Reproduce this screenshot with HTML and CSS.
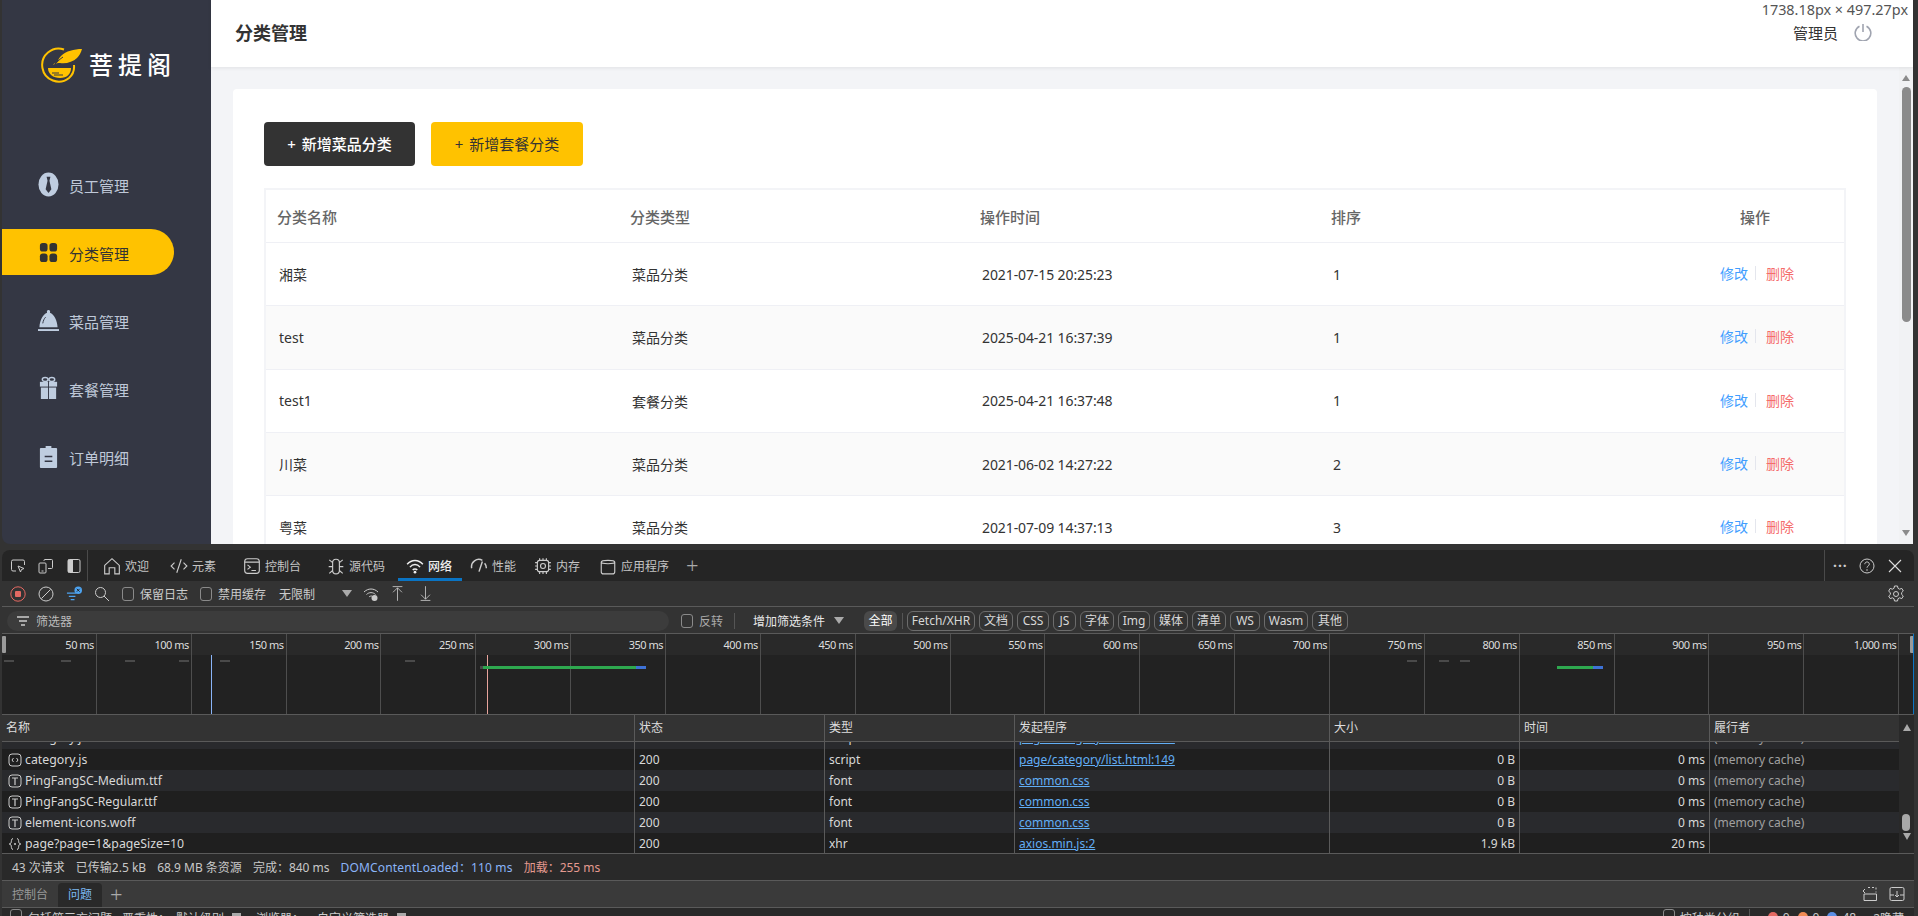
FILE: index.html
```html
<!DOCTYPE html>
<html lang="zh">
<head>
<meta charset="utf-8">
<title>分类管理</title>
<link rel="stylesheet" href="styles.css">
</head>
<body>
<div class="browser">
  <aside class="sidebar">
    <div class="logo">
      <svg class="logo-mark" viewBox="0 0 44 36" width="44" height="36">
        <path d="M24 2.500A16.500 16.500 0 1 0 29 31c4-3.500 5.500-8 5-13" fill="none" stroke="#ffc200" stroke-width="2"/>
        <path d="M42 2C34 2 26 4 21 9c-2 2-3 4-3 6-2 1-4 1-5 3 3-2 5-2 7-2 6 1 13-1 17-5 2-2 4-5 5-9z" fill="#ffc200"/>
        <path d="M15 17c3-3 5-5 8-7" fill="none" stroke="#343744" stroke-width="1"/>
        <path d="M8 21h23c0 6-4 10-11 10S8 27 8 21z" fill="#ffc200"/>
        <path d="M12 26h7M14 28h9" stroke="#343744" stroke-width="1"/>
      </svg>
      <span class="logo-text">菩提阁</span>
    </div>
    <nav class="menu">
      <a class="menu-item">
        <svg class="menu-icon" viewBox="0 0 22 26"><ellipse cx="11" cy="13" rx="10.500" ry="12.500" fill="#bfcde0"/><path d="M9 5h4l-1 4 2 9-3 4-3-4 2-9z" fill="#343744"/></svg>
        <span>员工管理</span>
      </a>
      <a class="menu-item active">
        <svg class="menu-icon" viewBox="0 0 22 26"><g fill="#333"><rect x="2" y="3" width="8" height="9" rx="3"/><rect x="12" y="3" width="8" height="9" rx="3"/><rect x="2" y="14" width="8" height="9" rx="3"/><rect x="12" y="14" width="8" height="9" rx="3"/></g></svg>
        <span>分类管理</span>
      </a>
      <a class="menu-item">
        <svg class="menu-icon" viewBox="0 0 22 26"><path d="M11 2a1.500 2 0 0 1 1.500 3C17 6.500 20 13 20.500 20H1.500C2 13 5 6.500 9.500 5A1.500 2 0 0 1 11 2z" fill="#bfcde0"/><rect x="0" y="22" width="22" height="2" fill="#bfcde0"/><path d="M5 16c.5-3 1.500-5 3-6.500" fill="none" stroke="#343744"/></svg>
        <span>菜品管理</span>
      </a>
      <a class="menu-item">
        <svg class="menu-icon" viewBox="0 0 22 26"><g fill="#bfcde0"><rect x="2" y="6" width="8.500" height="5"/><rect x="11.500" y="6" width="8.500" height="5"/><rect x="3" y="12" width="7.500" height="12"/><rect x="11.500" y="12" width="7.500" height="12"/></g><g fill="none" stroke="#bfcde0" stroke-width="1.500"><ellipse cx="7.500" cy="3.500" rx="3" ry="2"/><ellipse cx="14.500" cy="3.500" rx="3" ry="2"/></g></svg>
        <span>套餐管理</span>
      </a>
      <a class="menu-item">
        <svg class="menu-icon" viewBox="0 0 22 26"><path d="M3 4h5V2h6v2h5a1 1 0 0 1 1 1v19a1 1 0 0 1-1 1H3a1 1 0 0 1-1-1V5a1 1 0 0 1 1-1z" fill="#bfcde0"/><path d="M7 13h8M7 18h8" stroke="#343744" stroke-width="1.500"/></svg>
        <span>订单明细</span>
      </a>
    </nav>
  </aside>
  <main class="main">
    <header class="topbar">
      <h1 class="page-title">分类管理</h1>
      <div class="user">
        <span>管理员</span>
        <svg class="power" viewBox="0 0 18 18" width="18" height="18"><path d="M5.500 3.200a7.800 7.800 0 1 0 7 0" fill="none" stroke="#a0a4b0" stroke-width="1.600"/><path d="M9 1v8" stroke="#a0a4b0" stroke-width="1.600"/></svg>
      </div>
      <span class="size-tip">1738.18px × 497.27px</span>
    </header>
    <div class="content-wrap">
      <div class="content">
        <section class="card">
          <div class="actions">
            <button class="btn btn-dark">+ 新增菜品分类</button>
            <button class="btn btn-yellow">+ 新增套餐分类</button>
          </div>
          <div class="table">
            <div class="row head"><span>分类名称</span><span>分类类型</span><span>操作时间</span><span>排序</span><span class="op">操作</span></div>
            <div class="row"><span>湘菜</span><span>菜品分类</span><span class="date">2021-07-15 20:25:23</span><span>1</span><span class="op"><a class="edit">修改</a><i></i><a class="del">删除</a></span></div>
            <div class="row alt"><span>test</span><span>菜品分类</span><span class="date">2025-04-21 16:37:39</span><span>1</span><span class="op"><a class="edit">修改</a><i></i><a class="del">删除</a></span></div>
            <div class="row"><span>test1</span><span>套餐分类</span><span class="date">2025-04-21 16:37:48</span><span>1</span><span class="op"><a class="edit">修改</a><i></i><a class="del">删除</a></span></div>
            <div class="row alt"><span>川菜</span><span>菜品分类</span><span class="date">2021-06-02 14:27:22</span><span>2</span><span class="op"><a class="edit">修改</a><i></i><a class="del">删除</a></span></div>
            <div class="row"><span>粤菜</span><span>菜品分类</span><span class="date">2021-07-09 14:37:13</span><span>3</span><span class="op"><a class="edit">修改</a><i></i><a class="del">删除</a></span></div>
          </div>
        </section>
      </div>
      <div class="scrollbar">
        <b class="arrow-up"></b>
        <b class="thumb"></b>
        <b class="arrow-down"></b>
      </div>
    </div>
  </main>
</div>

<div class="devtools">
  <div class="dt-tabs">
    <div class="dt-tools">
      <svg class="ic" viewBox="0 0 16 16"><path d="M6 13H3a1.500 1.500 0 0 1-1.500-1.500v-8A1.500 1.500 0 0 1 3 2h10a1.500 1.500 0 0 1 1.500 1.500V7M8 8l6 2.500-2.500 1-1 2.500z" fill="none" stroke="#ccc"/></svg>
      <svg class="ic" viewBox="0 0 16 16"><path d="M6 3V2.500A1 1 0 0 1 7 1.500h6.500a1 1 0 0 1 1 1v7a1 1 0 0 1-1 1H10M2 5h5a1 1 0 0 1 1 1v8a1 1 0 0 1-1 1H2a1 1 0 0 1-1-1V6a1 1 0 0 1 1-1zM3.500 13h2" fill="none" stroke="#ccc"/></svg>
      <svg class="ic" viewBox="0 0 16 16"><rect x="2" y="1.500" width="12" height="13" rx="1.500" fill="none" stroke="#ccc"/><rect x="2" y="1.500" width="5" height="13" fill="#ccc"/></svg>
    </div>
    <div class="dt-tab-list">
      <a class="dt-tab"><svg class="ic" viewBox="0 0 16 16"><path d="M1.500 7.500L8 1.500l6.500 6V15h-4V9.500h-5V15h-4z" fill="none" stroke="#ccc"/></svg>欢迎</a>
      <a class="dt-tab"><svg class="ic" viewBox="0 0 16 16"><path d="M4 5L1 8l3 3M12 5l3 3-3 3M10 2L6 14" fill="none" stroke="#ccc"/></svg>元素</a>
      <a class="dt-tab"><svg class="ic" viewBox="0 0 16 16"><rect x="1.500" y="1.500" width="13" height="13" rx="2.500" fill="none" stroke="#ccc"/><path d="M1.500 4.500h13M4 7l2.500 2L4 11M7.500 12h4" fill="none" stroke="#ccc"/></svg>控制台</a>
      <a class="dt-tab"><svg class="ic" viewBox="0 0 16 16"><path d="M5 5c0-4 6-4 6 0v7c0 4-6 4-6 0zM5 5L2 2.500M11 5l3-2.500M5 8.500H1.500M11 8.500h3.500M5 12l-3 2.500M11 12l3 2.500" fill="none" stroke="#ccc"/></svg>源代码</a>
      <a class="dt-tab on"><svg class="ic" viewBox="0 0 16 16"><path d="M1 6.500c4-4.500 10-4.500 14 0M3.500 9c2.500-3 6.500-3 9 0M6 11.500c1-1.200 3-1.200 4 0" fill="none" stroke="#eee" stroke-width="1.300"/><circle cx="8" cy="13.500" r="1.200" fill="#eee"/></svg>网络</a>
      <a class="dt-tab"><svg class="ic" viewBox="0 0 16 16"><path d="M1.500 10A6.500 6.500 0 0 1 11 3M14.500 10a6.500 6.500 0 0 0-1.500-4.500M11 4L8 13" fill="none" stroke="#ccc" stroke-width="1.300"/></svg>性能</a>
      <a class="dt-tab"><svg class="ic" viewBox="0 0 16 16"><rect x="3" y="3" width="10" height="10" rx="2" fill="none" stroke="#ccc"/><circle cx="8" cy="8" r="2.200" fill="none" stroke="#ccc"/><path d="M5 1v2M8 1v2M11 1v2M5 13v2M8 13v2M11 13v2M1 5h2M1 8h2M1 11h2M13 5h2M13 8h2M13 11h2" stroke="#ccc"/></svg>内存</a>
      <a class="dt-tab"><svg class="ic" viewBox="0 0 16 16"><path d="M2 4.500C2 2.500 14 2.500 14 4.500v8.500c0 1.500-1 2-2 2H4c-1 0-2-.5-2-2zM2 4.500c0 2 12 2 12 0" fill="none" stroke="#ccc"/></svg>应用程序</a>
      <a class="dt-plus">+</a>
    </div>
    <div class="dt-win">
      <span class="dots">···</span>
      <svg class="ic" viewBox="0 0 16 16"><circle cx="8" cy="8" r="7" fill="none" stroke="#ccc"/><path d="M5.800 6.200c0-3 4.500-3 4.500 0 0 1.800-2.300 1.800-2.300 3.500" fill="none" stroke="#ccc"/><circle cx="8" cy="12" r=".8" fill="#ccc"/></svg>
      <svg class="ic" viewBox="0 0 16 16"><path d="M2 2l12 12M14 2L2 14" stroke="#ddd" stroke-width="1.100"/></svg>
    </div>
  </div>

  <div class="dt-bar">
    <svg class="ic" viewBox="0 0 16 16"><circle cx="8" cy="8" r="7.200" fill="none" stroke="#e46962"/><rect x="5" y="5" width="6" height="6" rx="1" fill="#e46962"/></svg>
    <svg class="ic gap-12" viewBox="0 0 16 16"><circle cx="8" cy="8" r="7" fill="none" stroke="#ccc"/><path d="M3.500 12.500l9-9" stroke="#ccc"/></svg>
    <svg class="ic gap-12" viewBox="0 0 17 16"><path d="M1 7h10M3 10.500h7M5 14h4" stroke="#4da3f0" stroke-width="1.300"/><circle cx="13" cy="4" r="4" fill="#4da3f0"/><path d="M11.500 2.500l3 3M14.500 2.500l-3 3" stroke="#1f1f1f"/></svg>
    <svg class="ic gap-12" viewBox="0 0 16 16"><circle cx="6.500" cy="6.500" r="5" fill="none" stroke="#ccc"/><path d="M10 10l5 5" stroke="#ccc"/></svg>
    <i class="check gap-12"></i><span class="lab">保留日志</span>
    <i class="check gap-12"></i><span class="lab">禁用缓存</span>
    <span class="lab gap-13">无限制</span>
    <i class="tri gap-27"></i>
    <svg class="ic gap-11" viewBox="0 0 16 16"><path d="M1 6c4-4 10-4 14 0M3.500 8.500c2.500-2.500 6.500-2.500 9 0M6 11c1-1 2-1 3-1" fill="none" stroke="#ccc"/><circle cx="11.500" cy="12" r="3" fill="#ccc"/></svg>
    <svg class="ic-tall gap-12" viewBox="0 0 16 20"><path d="M2 1.500h12M8 19V3M2.500 8.500L8 3l5.500 5.500" fill="none" stroke="#ccc"/></svg>
    <svg class="ic-tall gap-15" viewBox="0 0 16 20"><path d="M2 18.500h12M8 1v16M2.500 11.500L8 17l5.500-5.500" fill="none" stroke="#ccc"/></svg>
    <svg class="ic gear" viewBox="0 0 18 18" width="18" height="18"><path d="M7.500 1h3l.5 2.300 1.600.9 2.200-.8 1.500 2.600-1.700 1.600v1.800l1.700 1.600-1.500 2.600-2.200-.8-1.600.9-.5 2.300h-3l-.5-2.300-1.600-.9-2.200.8-1.500-2.600 1.700-1.600V8L1.700 6l1.500-2.600 2.200.8L7 3.300z" fill="none" stroke="#ccc"/><circle cx="9" cy="9" r="2.500" fill="none" stroke="#ccc"/></svg>
  </div>

  <div class="dt-filter">
    <div class="filter-input"><svg class="ic-sm" viewBox="0 0 12 12"><path d="M0 2h12M2 6h8M4 10h4" stroke="#ccc" stroke-width="1.500"/></svg>筛选器</div>
    <i class="check"></i><span class="lab dim">反转</span>
    <i class="sep"></i>
    <span class="more">增加筛选条件</span><i class="tri"></i>
    <span class="chip-all">全部</span>
    <i class="sep"></i>
    <span class="chip w68">Fetch/XHR</span><span class="chip w34">文档</span><span class="chip w32">CSS</span><span class="chip w23">JS</span><span class="chip w34">字体</span><span class="chip w32">Img</span><span class="chip w34">媒体</span><span class="chip w34">清单</span><span class="chip w30">WS</span><span class="chip w44">Wasm</span><span class="chip w36">其他</span>
  </div>

  <div class="timeline">
    <div class="tl-cols">
      <div class="tl-col"><span>50 ms</span></div><div class="tl-col"><span>100 ms</span></div><div class="tl-col"><span>150 ms</span></div><div class="tl-col"><span>200 ms</span></div><div class="tl-col"><span>250 ms</span></div><div class="tl-col"><span>300 ms</span></div><div class="tl-col"><span>350 ms</span></div><div class="tl-col"><span>400 ms</span></div><div class="tl-col"><span>450 ms</span></div><div class="tl-col"><span>500 ms</span></div><div class="tl-col"><span>550 ms</span></div><div class="tl-col"><span>600 ms</span></div><div class="tl-col"><span>650 ms</span></div><div class="tl-col"><span>700 ms</span></div><div class="tl-col"><span>750 ms</span></div><div class="tl-col"><span>800 ms</span></div><div class="tl-col"><span>850 ms</span></div><div class="tl-col"><span>900 ms</span></div><div class="tl-col"><span>950 ms</span></div><div class="tl-col"><span>1,000 ms</span></div>
    </div>
    <b class="handle h-left"></b>
    <b class="handle h-right"></b>
    <b class="edge"></b>
    <b class="dash d1"></b><b class="dash d2"></b><b class="dash d3"></b><b class="dash d4"></b><b class="dash d5"></b><b class="dash d6"></b><b class="dash d7"></b><b class="dash d8"></b><b class="dash d9"></b>
    <b class="vline blue"></b>
    <b class="vline red"></b>
    <b class="bar grey b0"></b>
    <b class="bar green b1"></b>
    <b class="bar bluebar b2"></b>
    <b class="bar green b3"></b>
    <b class="bar bluebar b4"></b>
  </div>

  <div class="net">
    <div class="net-main">
      <div class="net-head"><span>名称</span><span>状态</span><span>类型</span><span>发起程序</span><span>大小</span><span>时间</span><span>履行者</span></div>
      <div class="net-rows">
        <div class="net-row partial"><span class="nm"><svg class="ft" viewBox="0 0 14 14"><rect x="1" y="1" width="12" height="12" rx="3" fill="none" stroke="#ccc"/><path d="M5.500 5L4 7l1.500 2M8.500 5L10 7 8.500 9" fill="none" stroke="#ccc"/></svg>category.js</span><span>200</span><span>script</span><span><a class="lnk">page/category/list.html:148</a></span><span class="r">0 B</span><span class="r">0 ms</span><span class="mc">(memory cache)</span></div>
        <div class="net-row"><span class="nm"><svg class="ft" viewBox="0 0 14 14"><rect x="1" y="1" width="12" height="12" rx="3" fill="none" stroke="#ccc"/><path d="M5.500 5L4 7l1.500 2M8.500 5L10 7 8.500 9" fill="none" stroke="#ccc"/></svg>category.js</span><span>200</span><span>script</span><span><a class="lnk">page/category/list.html:149</a></span><span class="r">0 B</span><span class="r">0 ms</span><span class="mc">(memory cache)</span></div>
        <div class="net-row alt"><span class="nm"><svg class="ft" viewBox="0 0 14 14"><rect x="1" y="1" width="12" height="12" rx="3" fill="none" stroke="#ccc"/><path d="M4 4h6M7 4v7" fill="none" stroke="#ccc" stroke-width="1.200"/></svg>PingFangSC-Medium.ttf</span><span>200</span><span>font</span><span><a class="lnk">common.css</a></span><span class="r">0 B</span><span class="r">0 ms</span><span class="mc">(memory cache)</span></div>
        <div class="net-row"><span class="nm"><svg class="ft" viewBox="0 0 14 14"><rect x="1" y="1" width="12" height="12" rx="3" fill="none" stroke="#ccc"/><path d="M4 4h6M7 4v7" fill="none" stroke="#ccc" stroke-width="1.200"/></svg>PingFangSC-Regular.ttf</span><span>200</span><span>font</span><span><a class="lnk">common.css</a></span><span class="r">0 B</span><span class="r">0 ms</span><span class="mc">(memory cache)</span></div>
        <div class="net-row alt"><span class="nm"><svg class="ft" viewBox="0 0 14 14"><rect x="1" y="1" width="12" height="12" rx="3" fill="none" stroke="#ccc"/><path d="M4 4h6M7 4v7" fill="none" stroke="#ccc" stroke-width="1.200"/></svg>element-icons.woff</span><span>200</span><span>font</span><span><a class="lnk">common.css</a></span><span class="r">0 B</span><span class="r">0 ms</span><span class="mc">(memory cache)</span></div>
        <div class="net-row"><span class="nm"><svg class="ft" viewBox="0 0 14 14"><path d="M5 1.500C3 1.500 3.500 5 3 6S1 7 1 7s1.500 0 2 1 0 4.500 2 4.500M9 1.500c2 0 1.500 3.500 2 4.500s2 1 2 1-1.500 0-2 1 0 4.500-2 4.500" fill="none" stroke="#ccc"/><circle cx="7" cy="7" r="1" fill="#ccc"/></svg>page?page=1&amp;pageSize=10</span><span>200</span><span>xhr</span><span><a class="lnk">axios.min.js:2</a></span><span class="r">1.9 kB</span><span class="r">20 ms</span><span class="mc"></span></div>
      </div>
    </div>
    <div class="net-scroll">
      <b class="a-up"></b>
      <b class="n-thumb"></b>
      <b class="a-down"></b>
    </div>
  </div>

  <div class="dt-status">
    <span>43 次请求</span><span>已传输2.5 kB</span><span>68.9 MB 条资源</span><span>完成：840 ms</span><span class="st-blue">DOMContentLoaded：110 ms</span><span class="st-red">加载：255 ms</span>
  </div>

  <div class="drawer">
    <span class="dr-tab">控制台</span>
    <span class="dr-tab on">问题</span>
    <span class="dr-plus">+</span>
    <div class="dr-right">
      <svg class="ic" viewBox="0 0 16 16"><path d="M6 1.500h2M10 1.500h2M14 1.500v2M14 5.500v1M2 8h12.500v6.500H2zM1 5l2-2M1 5l2 2" fill="none" stroke="#ccc"/></svg>
      <svg class="ic" viewBox="0 0 16 16"><rect x="1" y="1.500" width="14" height="13" rx="1.500" fill="none" stroke="#ccc"/><path d="M1 9h4M11 9h4M8 5v6M6 9l2 2 2-2" fill="none" stroke="#ccc"/></svg>
    </div>
  </div>

  <div class="issues">
    <i class="check"></i><span>包括第三方问题</span><span class="g4">严重性：</span><span>默认级别</span><b class="sq"></b><span class="g9">浏览器：</span><span class="g1">自定义筛选器</span><b class="sq"></b>
    <div class="issues-right">
      <i class="check"></i><span>按种类分组</span><i class="sep"></i>
      <b class="dot d-red"></b><span>0</span><b class="dot d-or"></b><span>0</span><b class="dot d-bl"></b><span>48</span><span class="hid">2隐藏</span>
    </div>
  </div>
</div>
</body>
</html>
```

FILE: styles.css
```css
* { box-sizing: border-box; }
html, body { margin: 0; height: 916px; overflow: hidden; background: #333; }
body { font-family: "Noto Sans", "Noto Sans CJK SC", sans-serif; display: flex; flex-direction: column; }
a { text-decoration: none; }
i, b { display: block; font-style: normal; flex: none; }

/* browser page */
.browser { display: flex; height: 544px; margin: 0 5px 0 2px; flex: none; }
.sidebar { width: 209px; background: #343744; border-bottom-left-radius: 8px; flex: none; }
.logo { display: flex; align-items: center; height: 48px; margin-top: 41px; padding-left: 38px; }
.logo-mark { flex: none; }
.logo-text { margin-left: 5px; font-size: 24px; letter-spacing: 5px; color: #fff; font-weight: 500; line-height: 1; }
.menu { display: flex; flex-direction: column; gap: 22px; margin-top: 72px; }
.menu-item { display: flex; align-items: center; height: 46px; width: 172px; padding-left: 36px; font-size: 15px; color: #bfc8d8; border-radius: 0 23px 23px 0; }
.menu-item span { padding-top: 2px; }
.menu-item.active { background: #ffc200; color: #333; }
.menu-icon { width: 21px; height: 25px; margin-right: 10px; margin-top: 1px; flex: none; }

.main { flex: 1; min-width: 0; display: flex; flex-direction: column; background: #f3f4f7; }
.topbar { height: 67px; background: #fff; flex: none; display: flex; align-items: center; justify-content: space-between; padding: 0 41px 3px 24px; box-shadow: 0 1px 4px rgba(0, 0, 0, .08); position: relative; z-index: 1; }
.page-title { margin: 0; font-size: 18px; font-weight: 700; color: #333; }
.user { display: flex; align-items: center; gap: 16px; font-size: 15px; color: #333; }
.power { flex: none; }
.size-tip { position: absolute; right: 5px; top: 0; font-size: 14.400px; line-height: 20px; color: #555; }

.content-wrap { flex: 1; display: flex; min-height: 0; }
.content { flex: 1; padding: 22px 22px 0; overflow: hidden; }
.card { background: #fff; border-radius: 4px 4px 0 0; height: 455px; padding: 33px 31px 0; overflow: hidden; }
.actions { display: flex; gap: 16px; }
.btn { height: 44px; width: 151px; border: 0; border-radius: 4px; padding: 0 0 2px; font: 500 15px "Noto Sans", "Noto Sans CJK SC", sans-serif; word-spacing: 2px; }
.btn-dark { background: #333; color: #fff; }
.btn-yellow { background: #ffc200; color: #333; width: 152px; font-weight: 400; }

.table { margin-top: 22px; border: 2px solid #f3f4f7; border-bottom: 0; }
.row { display: grid; grid-template-columns: 353px 350px 351px 200px 1fr; align-items: center; height: 63.300px; padding-left: 13px; font-size: 14px; color: #333; border-bottom: 1px solid #eff0f5; }
.row.alt { background: #fafafa; }
.row.head { height: 53px; padding-left: 11px; font-size: 15px; font-weight: 500; color: #666; }
.date { letter-spacing: -.1px; }
.op { display: flex; justify-content: flex-end; align-items: center; padding: 0 50px 2px 0; }
.head .op { padding: 0 74px 0 0; }
.op i { width: 1px; height: 14px; background: #e4e6ed; margin: 0 10px 0 7px; }
.edit { color: #419eff; }
.del { color: #f56c6c; }

.scrollbar { width: 14px; background: #f1f2f4; display: flex; flex-direction: column; align-items: center; flex: none; padding-top: 8px; }
.arrow-up { width: 0; border: 4.500px solid transparent; border-top: 0; border-bottom: 6px solid #8b8b8b; }
.thumb { width: 9px; height: 235px; border-radius: 5px; background: #8b8b8b; margin-top: 6px; }
.arrow-down { width: 0; border: 4.500px solid transparent; border-bottom: 0; border-top: 6px solid #8b8b8b; margin-top: auto; margin-bottom: 8px; }

/* devtools */
.devtools { flex: 1; min-height: 0; display: flex; flex-direction: column; margin: 6px 4px 0 2px; font-size: 12px; color: #ccc; overflow: hidden; }
.ic { width: 16px; height: 16px; flex: none; }
.ic-tall { width: 13px; height: 17px; flex: none; }
.dt-tabs { height: 31px; flex: none; background: #252525; display: flex; align-items: center; border-radius: 8px 8px 0 0; }
.dt-tools { display: flex; align-items: center; gap: 12px; height: 31px; width: 86px; padding-left: 8px; border-right: 1px solid #4a4a4a; flex: none; }
.dt-tab-list { display: grid; grid-template-columns: 67px 73px 84px 79px 64px 64px 65px 87px auto; margin-left: 15px; height: 31px; align-items: center; }
.dt-tab { display: flex; align-items: center; gap: 4px; height: 31px; color: #c4c4c4; position: relative; white-space: nowrap; }
.dt-tab .ic { width: 18px; height: 18px; }
.dt-tab.on { color: #eee; font-weight: 500; }
.dt-tab.on::after { content: ""; position: absolute; left: -8px; width: 64px; bottom: 0; height: 3px; background: #0a74c4; }
.dt-plus { font-size: 22px; font-weight: 300; color: #aaa; line-height: 31px; }
.dt-win { margin-left: auto; display: flex; align-items: center; gap: 12px; height: 31px; border-left: 1px solid #4a4a4a; padding: 0 11px 0 8px; }
.dots { font-size: 14px; font-weight: 700; letter-spacing: 1px; width: 14px; }

.dt-bar { height: 26px; flex: none; display: flex; align-items: center; background: #333; padding-left: 8px; border-bottom: 1px solid #5a5a5a; }
.check { width: 12px; height: 14px; border: 1px solid #8a8a8a; border-radius: 3px; }
.lab { margin-left: 6px; white-space: nowrap; }
.lab.dim { color: #aaa; }
.tri { width: 0; border: 5px solid transparent; border-bottom: 0; border-top: 7px solid #aaa; }
.gap-11 { margin-left: 11px; }
.gap-12 { margin-left: 12px; }
.gap-13 { margin-left: 13px; }
.gap-15 { margin-left: 15px; }
.gap-27 { margin-left: 27px; }
.gear { width: 18px; height: 18px; margin-left: auto; margin-right: 9px; }

.dt-filter { height: 27px; flex: none; display: flex; align-items: center; background: #333; padding: 1px 0 0 5px; border-bottom: 1px solid #5a5a5a; }
.ic-sm { width: 12px; height: 12px; flex: none; }
.filter-input { width: 662px; height: 20px; border-radius: 10px; background: #3c3c3c; display: flex; align-items: center; gap: 7px; padding-left: 10px; margin-right: 12px; color: #bbb; }
.sep { width: 1px; height: 16px; background: #555; margin: 0 11px; }
.more { color: #e8e8e8; margin-left: 7px; margin-right: 9px; }
.dt-filter .tri { margin-right: 20px; }
.chip-all { background: #4a4a4a; color: #fff; height: 20px; width: 33px; border-radius: 6px; text-align: center; line-height: 20px; margin-right: -6px; }
.dt-filter .chip-all + .sep { margin: 0 4px 0 11px; }
.chip { height: 20px; border: 1px solid #6c6c6c; border-radius: 6px; text-align: center; line-height: 18px; margin-right: 4px; color: #d8d8d8; flex: none; white-space: nowrap; }
.w68 { width: 68px; } .w34 { width: 34px; } .w32 { width: 32px; } .w23 { width: 23px; } .w30 { width: 30px; } .w44 { width: 44px; } .w36 { width: 36px; }

.timeline { height: 81px; flex: none; background: #222; position: relative; border-bottom: 1px solid #5a5a5a; overflow: hidden; }
.tl-cols { display: flex; height: 100%; background: linear-gradient(#292929 21px, transparent 21px); }
.tl-col { width: 94.870px; height: 100%; border-right: 1px solid #4e4e4e; text-align: right; padding: 2px 2px 0 0; color: #ddd; font-size: 11px; letter-spacing: -.5px; line-height: 17px; flex: none; white-space: nowrap; }
.handle { position: absolute; top: 2px; width: 4px; height: 17px; background: #9a9a9a; border-radius: 1px; }
.h-left { left: 0; }
.h-right { right: 0; }
.edge { position: absolute; right: 0; top: 0; bottom: 0; width: 1px; background: #0a74c4; }
.dash { position: absolute; top: 26px; width: 10px; height: 2px; background: #4a4a4a; }
.d1 { left: 2px; } .d2 { left: 59px; } .d3 { left: 123px; } .d4 { left: 177px; } .d5 { left: 218px; } .d6 { left: 403px; } .d7 { left: 1405px; } .d8 { left: 1437px; } .d9 { left: 1458px; }
.vline { position: absolute; top: 21px; bottom: 0; width: 1px; }
.vline.blue { left: 209px; background: #8ab4f8; }
.vline.red { left: 485px; background: #e8a49c; }
.bar { position: absolute; top: 32px; height: 2.500px; }
.grey { background: #4a4a4a; }
.green { background: #2ea84f; }
.bluebar { background: #3e72d6; }
.b0 { left: 478px; width: 3px; }
.b1 { left: 481px; width: 153px; }
.b2 { left: 634px; width: 10px; }
.b3 { left: 1555px; width: 36px; }
.b4 { left: 1591px; width: 10px; }

.net { height: 139px; flex: none; display: flex; background: #1f1f1f; border-bottom: 1px solid #5a5a5a; }
.net-main { flex: 1; min-width: 0; }
.net-head, .net-row { display: grid; grid-template-columns: 633px 190px 190px 315px 190px 190px 1fr; }
.net-head { height: 27px; background: #333; border-bottom: 1px solid #5a5a5a; align-items: center; color: #ddd; }
.net-head span { height: 26px; line-height: 26px; padding-left: 4px; border-right: 1px solid #5a5a5a; }
.net-head span:last-child { border-right: 0; }
.net-rows { height: 111px; overflow: hidden; }
.net-row { height: 21px; line-height: 22px; background: #1f1f1f; color: #d8d8d8; }
.net-row.alt, .net-row.partial { background: #292a2d; }
.net-row.partial { margin-top: -14px; line-height: 19px; }
.net-row > span { padding-left: 4px; border-right: 1px solid #5a5a5a; white-space: nowrap; overflow: hidden; }
.net-row > span:last-child { border-right: 0; }
.nm { display: flex; align-items: center; gap: 3px; font-size: 12.300px; }
.partial .nm { align-items: flex-start; }
.ft { width: 14px; height: 14px; flex: none; margin-left: 2px; }
.net-row:not(.partial) .ft { margin-top: 0; }
.r { text-align: right; padding-right: 4px; }
.lnk { color: #62aef5; text-decoration: underline; }
.mc { color: #a0a0a0; }
.net-scroll { width: 15px; flex: none; background: #292929; display: flex; flex-direction: column; align-items: center; padding: 9px 0 9px; position: relative; }
.a-up { width: 0; border: 4.500px solid transparent; border-top: 0; border-bottom: 7px solid #aaa; }
.n-thumb { position: absolute; top: 99px; left: 3px; width: 8px; height: 17px; border-radius: 4px; background: #a8a8a8; }
.a-down { width: 0; border: 4.500px solid transparent; border-bottom: 0; border-top: 7px solid #aaa; margin-top: auto; margin-bottom: 4px; }

.dt-status { height: 27px; flex: none; background: #292929; display: flex; align-items: center; gap: 11px; padding-left: 10px; border-bottom: 1px solid #5a5a5a; color: #c8c8c8; white-space: nowrap; }
.st-blue { color: #8ab4f8; letter-spacing: .15px; }
.st-red { color: #e59a90; }

.drawer { height: 27px; flex: none; background: #3a3a3a; display: flex; align-items: flex-end; padding-left: 10px; border-bottom: 1px solid #5a5a5a; }
.dr-tab { height: 24px; line-height: 24px; color: #999; padding-right: 10px; }
.dr-tab.on { background: #292929; color: #7cb8f2; width: 44px; padding: 0 10px; border-radius: 4px 4px 0 0; }
.dr-plus { font-size: 22px; font-weight: 300; color: #aaa; line-height: 26px; margin-left: 8px; height: 26px; }
.dr-right { margin-left: auto; display: flex; gap: 11px; height: 26px; align-items: center; padding-right: 9px; }

.issues { flex: 1; min-height: 0; background: #292929; display: flex; align-items: flex-start; gap: 6px; padding: 1px 0 0 8px; white-space: nowrap; color: #ccc; overflow: hidden; }
.g4 { margin-left: 4px; }
.g9 { margin-left: 9px; }
.g1 { margin-left: 7px; }
.sq { width: 9px; height: 4px; background: #aaa; margin: 4px 0 0 2px; }
.issues-right { margin-left: auto; display: flex; align-items: flex-start; gap: 5px; padding-right: 10px; }
.issues-right .sep { margin: 0 10px 0 4px; height: 14px; }
.dot { width: 10px; height: 10px; border-radius: 50%; margin: 3px 0 0 3px; }
.hid { margin-left: 12px; }
.d-red { background: #e46962; }
.d-or { background: #f28b54; }
.d-bl { background: #5b8fe6; }
```
